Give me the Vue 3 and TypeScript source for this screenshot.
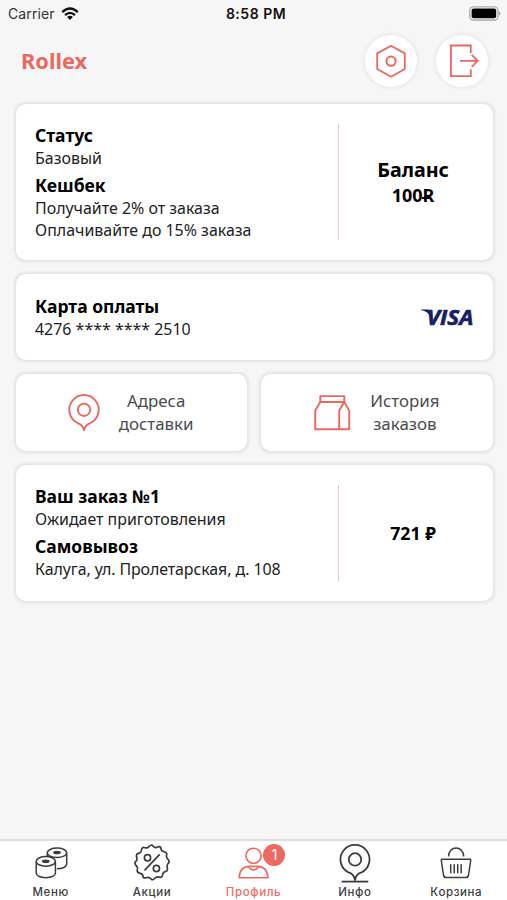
<script setup lang="ts">
import { ref } from 'vue'

type TabId = 'menu' | 'promo' | 'profile' | 'info' | 'cart'

interface Tab {
  id: TabId
  label: string
  badge?: number
}

const tabs: Tab[] = [
  { id: 'menu', label: 'Меню' },
  { id: 'promo', label: 'Акции' },
  { id: 'profile', label: 'Профиль', badge: 1 },
  { id: 'info', label: 'Инфо' },
  { id: 'cart', label: 'Корзина' },
]

const active = ref<TabId>('profile')
</script>

<template>
  <div class="screen">
    <div class="status-bar">
      <div class="carrier">
        <span>Carrier</span>
        <svg width="18" height="14" viewBox="0 0 18 14" fill="none" stroke="#111" stroke-width="2.3">
          <path d="M1.2 5.2Q9 -2.2 16.8 5.2" />
          <path d="M4 8.2Q9 3.6 14 8.2" />
          <path d="M6.1 9.9Q9 7.6 11.9 9.9L9 13Z" fill="#111" stroke="none" />
        </svg>
      </div>
      <div class="clock">8:58 PM</div>
      <div class="battery">
        <svg width="32" height="15" viewBox="0 0 32 15">
          <rect x="0.8" y="0.8" width="28.2" height="13.2" rx="3.6" fill="#fff" stroke="#a8a8a8" stroke-width="1.3" />
          <rect x="2.6" y="2.6" width="24.6" height="9.6" rx="2" fill="#000" />
          <path d="M30.2 5.2Q32.4 7.4 30.2 9.6Z" fill="#888" />
        </svg>
      </div>
    </div>

    <header class="header">
      <h1 class="brand">Rollex</h1>
      <div class="actions">
        <button class="round" aria-label="Настройки">
          <svg width="52" height="52" viewBox="0 0 52 52" fill="none" stroke="#ea685f" stroke-width="1.8" stroke-linejoin="round">
            <path d="M26 10.8L39.8 18.4V34L26 41.7L12.2 34V18.4Z" />
            <circle cx="26" cy="26.2" r="4.6" stroke-width="2" />
          </svg>
        </button>
        <button class="round" aria-label="Выйти">
          <svg width="52" height="52" viewBox="0 0 52 52" fill="none" stroke="#ea685f" stroke-width="1.8">
            <path d="M34.8 18V10.5H14.9V41.2H34.8V34.3" />
            <path d="M24 25.8H41.5M35.7 19.8L41.7 25.8L35.7 31.8" />
          </svg>
        </button>
      </div>
    </header>

    <main class="content">
      <section class="card status-card">
        <div class="details">
          <h2>Статус</h2>
          <p>Базовый</p>
          <h2 class="next">Кешбек</h2>
          <p>Получайте 2% от заказа</p>
          <p class="tight">Оплачивайте до 15% заказа</p>
        </div>
        <div class="side">
          <div class="balance-title">Баланс</div>
          <div class="balance-value">100<span class="rouble">R</span></div>
        </div>
      </section>

      <section class="card pay-card">
        <div class="details">
          <h2>Карта оплаты</h2>
          <p>4276 **** **** 2510</p>
        </div>
        <svg class="visa" width="62" height="36" viewBox="0 0 62 36" fill="#1a1f64">
          <path d="M1 10.6H8Q9.8 10.7 10.3 12.6L11.4 18.9Q8 12.4 1 11.1Z" />
          <text x="6.8" y="26" textLength="46.5" lengthAdjust="spacingAndGlyphs" stroke="#1a1f64" stroke-width="0.7">VISA</text>
        </svg>
      </section>

      <div class="shortcuts">
        <button class="card shortcut">
          <svg width="40" height="44" viewBox="0 0 40 44" fill="none" stroke="#ea685f" stroke-width="1.9" stroke-linejoin="round">
            <path d="M20 39.4C19.4 35.8 17.2 33.4 14.3 32.3A14.7 14.7 0 1 1 25.7 32.3C22.8 33.4 20.6 35.8 20 39.4Z" />
            <circle cx="20" cy="18.8" r="6.2" />
          </svg>
          <span>Адреса<br />доставки</span>
        </button>
        <button class="card shortcut history">
          <svg width="40" height="44" viewBox="0 0 40 44" fill="none" stroke="#ea685f" stroke-width="1.9" stroke-linejoin="round">
            <path d="M8.3 5.1H32.3V11H8.3Z" />
            <path d="M8.3 11L3.2 19.6V38.2H37.2V19.6L32.3 11L27.2 19.6V38.2" />
          </svg>
          <span>История<br />заказов</span>
        </button>
      </div>

      <section class="card order-card">
        <div class="details">
          <h2>Ваш заказ №1</h2>
          <p>Ожидает приготовления</p>
          <h2 class="next">Самовывоз</h2>
          <p class="address">Калуга, ул. Пролетарская, д. 108</p>
        </div>
        <div class="side price">721 ₽</div>
      </section>
    </main>

    <nav class="tabs">
      <button
        v-for="tab in tabs"
        :key="tab.id"
        class="tab"
        :class="{ active: active === tab.id }"
        @click="active = tab.id"
      >
        <span class="icon">
          <svg v-if="tab.id === 'menu'" width="40" height="42" viewBox="0 0 40 42" fill="none" stroke="currentColor" stroke-width="1.5">
            <ellipse cx="26" cy="11.8" rx="9.7" ry="4.7" />
            <ellipse cx="26" cy="11.4" rx="3.2" ry="1" fill="currentColor" />
            <path d="M16.3 11.8V15.8M35.7 11.8V23.2Q34.5 27.6 25.8 27.8" />
            <ellipse cx="14.8" cy="20.4" rx="9.6" ry="4.8" />
            <ellipse cx="14.8" cy="20.2" rx="3.2" ry="1" fill="currentColor" />
            <path d="M5.2 20.4V32.2Q6 36.6 14.8 36.7Q23.6 36.6 24.4 32.2V20.4" />
          </svg>
          <svg v-else-if="tab.id === 'promo'" width="40" height="42" viewBox="0 0 40 42" fill="none" stroke="currentColor" stroke-width="1.7" stroke-linejoin="round">
            <path d="M20 4Q22.5 7.2 24.5 6.5Q27 5 28.7 6.3Q29.1 9.7 31 10.3Q34 10.6 34.9 12.8Q33.8 15.5 35 17.2Q37.4 19.2 37.1 21.4Q34.7 23.5 35 25.6Q36.2 28.3 34.9 30Q31.4 30.8 30.8 32.8Q30.5 35.8 28.7 36.5Q25.6 35.3 24 36.3Q21.9 38.8 20 38.8Q17.8 36.1 15.8 36.3Q13 37.5 11.3 36.5Q10.8 33.2 9 32.6Q5.9 32.2 5.1 30Q6.2 27.1 5 25.5Q2.7 23.5 2.9 21.4Q5.4 19.5 5 17.2Q3.9 14.6 5.1 12.8Q8.5 12.1 9.1 10.2Q9.7 7 11.3 6.3Q14.3 7.4 16 6.4Q18 4 20 4Z" />
            <path d="M27.7 13.4L12.5 29.3" />
            <circle cx="15.5" cy="16.8" r="3.1" /><circle cx="24.4" cy="27.5" r="3.1" />
          </svg>
          <svg v-else-if="tab.id === 'profile'" width="40" height="42" viewBox="0 0 40 42" fill="none" stroke="currentColor" stroke-width="1.6" stroke-linejoin="round">
            <circle cx="20.5" cy="14.8" r="7.6" />
            <path d="M6.1 36.8C6.4 29.6 10.3 25.6 16.2 25.4H24.8C30.7 25.6 34.6 29.6 34.9 36.8Z" />
            <path d="M15.1 25.6Q20.5 32.4 25.9 25.6" />
          </svg>
          <svg v-else-if="tab.id === 'info'" width="40" height="42" viewBox="0 0 40 42" fill="none" stroke="currentColor" stroke-width="1.8" stroke-linejoin="round">
            <path d="M20 39C19.2 34.8 17 32.5 14.1 31.7A14.5 14.5 0 1 1 25.9 31.7C23 32.5 20.8 34.8 20 39Z" />
            <circle cx="20" cy="18.4" r="6.2" />
            <path d="M6.7 40.6H33.3" />
          </svg>
          <svg v-else width="40" height="42" viewBox="0 0 40 42" fill="none" stroke="currentColor" stroke-width="1.5" stroke-linejoin="round">
            <path d="M12.5 15.6C12.5 4.2 27.7 4.2 27.7 15.6" />
            <path d="M5.4 18.2H34.6V20.5L32.5 34Q32 36.6 29.5 36.6H10.5Q8 36.6 7.5 34L5.4 20.5Z" />
            <path d="M14.7 23.3V32.2M18.2 23.3V32.2M21.7 23.3V32.2M25.2 23.3V32.2" />
          </svg>
          <span v-if="tab.badge" class="badge">{{ tab.badge }}</span>
        </span>
        <span class="label">{{ tab.label }}</span>
      </button>
    </nav>
  </div>
</template>

<style>
body {
  margin: 0;
  background: #f6f6f6;
}
</style>

<style scoped>
.screen {
  box-sizing: border-box;
  display: flex;
  flex-direction: column;
  width: 507px;
  height: 900px;
  overflow: hidden;
  background: #f6f6f6;
  color: #000;
  font-family: 'Noto Sans', sans-serif;
}
button {
  margin: 0;
  padding: 0;
  border: 0;
  font: inherit;
  color: inherit;
}
svg {
  display: block;
  flex: none;
}
h1, h2, p {
  margin: 0;
}
.status-bar {
  display: grid;
  grid-template-columns: 1fr auto 1fr;
  align-items: center;
  height: 27px;
  padding: 0 6px 0 8px;
  font-family: Inter, sans-serif;
  color: #111;
}
.carrier {
  display: flex;
  align-items: center;
  gap: 6px;
  font-size: 14px;
  letter-spacing: 0.1px;
  color: #333;
}
.clock {
  padding-left: 3px;
  font-size: 14px;
  font-weight: 600;
  letter-spacing: 0.5px;
}
.battery {
  display: flex;
  justify-content: flex-end;
  padding-bottom: 1px;
}
.header {
  display: flex;
  align-items: center;
  justify-content: space-between;
  height: 67px;
  padding: 0 19px 0 21px;
}
.brand {
  font-size: 21.8px;
  line-height: 30px;
  font-weight: 700;
  color: #ea685f;
}
.actions {
  display: flex;
  gap: 19px;
}
.round {
  width: 52px;
  height: 52px;
  border-radius: 50%;
  background: #fff;
  box-shadow: 0 0 4px 1px rgba(0, 0, 0, 0.07);
}
.content {
  display: flex;
  flex-direction: column;
  gap: 14px;
  padding: 10px 14.5px 0 16px;
  flex: 1;
}
.card {
  box-sizing: border-box;
  display: flex;
  align-items: center;
  background: #fff;
  border-radius: 10px;
  box-shadow: 0 0 3px 1.5px rgba(0, 0, 0, 0.075);
}
.status-card {
  height: 156px;
  padding: 20px 0 20px 19px;
}
.details {
  flex: 1;
}
.details h2 {
  font-size: 17.5px;
  line-height: 24px;
  font-weight: 700;
}
.details h2.next {
  margin-top: 4px;
}
.details h2.next + p {
  line-height: 23px;
}
.details p {
  font-size: 15.95px;
  line-height: 22px;
  color: #222;
}
.details p.tight {
  line-height: 21px;
}
.details p.address {
  letter-spacing: -0.09px;
}
.order-card .details {
  padding-bottom: 1px;
}
.side {
  display: flex;
  flex-direction: column;
  align-items: center;
  justify-content: center;
  align-self: stretch;
  box-sizing: border-box;
  width: 155px;
  padding-right: 5px;
  border-left: 1px solid #f8c6c1;
  font-weight: 700;
}
.balance-title {
  font-size: 19.7px;
  line-height: 27px;
}
.balance-value {
  font-size: 18px;
  line-height: 25px;
}
.rouble {
  position: relative;
}
.rouble::before {
  content: '';
  position: absolute;
  left: -1px;
  top: 14px;
  width: 9px;
  height: 2px;
  background: #000;
}
.pay-card {
  height: 86px;
  padding: 0 11px 0 19px;
}
.visa {
  font-family: 'Open Sans', sans-serif;
  font-size: 21.5px;
  font-weight: 700;
  font-style: italic;
}
.shortcuts {
  display: grid;
  grid-template-columns: 1fr 1fr;
  gap: 14px;
}
.shortcut {
  height: 77px;
  justify-content: center;
  gap: 15px;
  padding-right: 6px;
  font-size: 16.9px;
  line-height: 23px;
  color: #4b4b50;
  text-align: center;
}
.shortcut span {
  padding-bottom: 1px;
}
.history {
  gap: 18px;
  padding-right: 2px;
}
.order-card {
  height: 136px;
  padding: 20px 0 20px 19px;
}
.price {
  font-size: 17.7px;
}
.tabs {
  display: grid;
  grid-template-columns: repeat(5, 1fr);
  height: 59px;
  border-top: 2px solid #dfdfdf;
  background: #fff;
}
.tab {
  display: flex;
  flex-direction: column;
  align-items: center;
  background: none;
  color: #3c3c40;
}
.tab.active {
  color: #ed6a60;
}
.icon {
  position: relative;
  height: 42px;
}
.badge {
  position: absolute;
  left: 30px;
  top: 3px;
  width: 22px;
  height: 22px;
  border-radius: 50%;
  background: #ed6a60;
  color: #fff;
  font-family: Inter, sans-serif;
  font-size: 14px;
  line-height: 22px;
  text-align: center;
}
.label {
  padding-top: 2px;
  font-family: Inter, sans-serif;
  font-size: 11.5px;
  line-height: 15px;
  font-weight: 500;
  letter-spacing: 0.6px;
}
</style>
